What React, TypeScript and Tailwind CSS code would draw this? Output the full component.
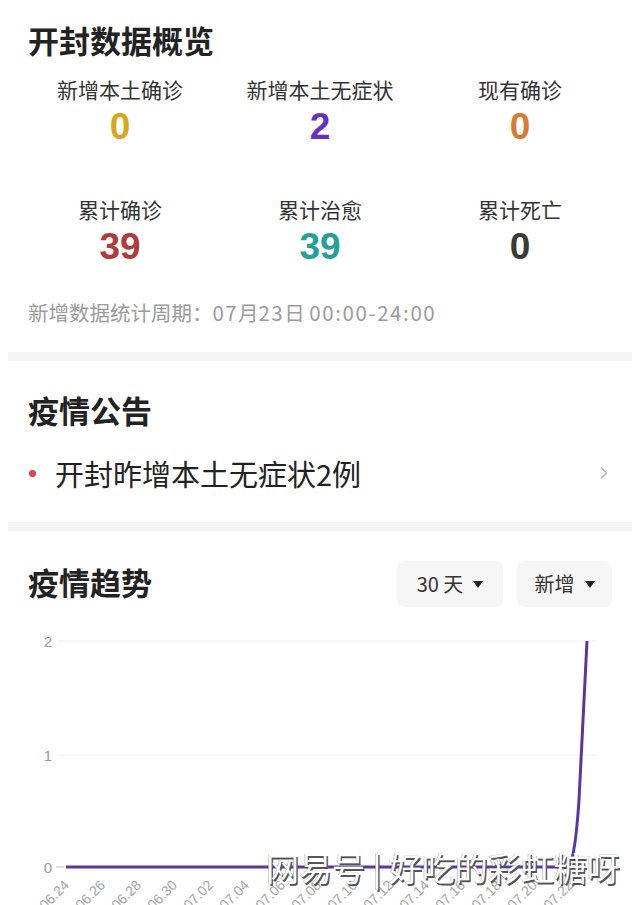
import { ChevronRight } from 'lucide-react';

interface Stat {
  label: string;
  value: string;
  color: string;
}

const stats: Stat[] = [
  { label: '新增本土确诊', value: '0', color: 'text-[#d6a71c]' },
  { label: '新增本土无症状', value: '2', color: 'text-[#6431c0]' },
  { label: '现有确诊', value: '0', color: 'text-[#d97a33]' },
  { label: '累计确诊', value: '39', color: 'text-[#b23a3c]' },
  { label: '累计治愈', value: '39', color: 'text-[#24a09c]' },
  { label: '累计死亡', value: '0', color: 'text-[#3a3a3a]' },
];

const dates = ['06.24', '06.26', '06.28', '06.30', '07.02', '07.04', '07.06', '07.08', '07.10', '07.12', '07.14', '07.16', '07.18', '07.20', '07.22'];

function Caret() {
  return (
    <svg width="10" height="7" viewBox="0 0 10 7" className="ml-[10px]">
      <path d="M0 0h10L5 7z" fill="#222" />
    </svg>
  );
}

function TrendChart() {
  const x0 = 66;
  const step = 36;
  return (
    <svg width="640" height="285" viewBox="0 620 640 285" className="block">
      {[641, 755].map((y) => (
        <line key={y} x1="58" x2="597" y1={y} y2={y} stroke="#f0f0f0" strokeWidth="1" />
      ))}
      <text x="52" y="647" textAnchor="end" fontSize="15" fill="#9a9a9a" fontFamily="Liberation Sans, sans-serif">2</text>
      <text x="52" y="761" textAnchor="end" fontSize="15" fill="#9a9a9a" fontFamily="Liberation Sans, sans-serif">1</text>
      <text x="52" y="873" textAnchor="end" fontSize="15" fill="#9a9a9a" fontFamily="Liberation Sans, sans-serif">0</text>
      <line x1="56" x2="64" y1="867" y2="867" stroke="#bbb" strokeWidth="1" />
      {dates.map((d, i) => {
        const x = x0 + i * step + 4;
        return (
          <text
            key={d}
            x={x}
            y={886}
            textAnchor="end"
            fontSize="14"
            fill="#a5a5a5"
            fontFamily="Liberation Sans, sans-serif"
            transform={`rotate(-45 ${x} 886)`}
          >
            {d}
          </text>
        );
      })}
      <path
        d="M66 867 L566 867 C572 867 576 845 579 800 L587 641"
        fill="none"
        stroke="#5a35a6"
        strokeWidth="3"
        strokeLinejoin="round"
      />
    </svg>
  );
}

export default function App() {
  return (
    <div className="relative w-[640px] h-[905px] overflow-hidden bg-white text-[#222] font-['Noto_Sans_CJK_SC','Noto_Sans',sans-serif]">
      {/* 数据概览 */}
      <div className="pt-[22px]">
        <h1 className="px-7 text-[31px] leading-[36px] font-bold">开封数据概览</h1>
        <div className="mt-[17px] px-5 grid grid-cols-3 gap-y-[49px]">
          {stats.map((s) => (
            <div key={s.label} className="flex flex-col items-center">
              <div className="text-[21px] leading-[28px] text-[#333]">{s.label}</div>
              <div className={`mt-[5px] font-['Liberation_Sans',sans-serif] text-[37px] leading-[38px] font-bold ${s.color}`}>
                {s.value}
              </div>
            </div>
          ))}
        </div>
        <p className="mt-[32px] px-7 text-[20.5px] leading-[28px] text-[#9b9b9b]">
          新增数据统计周期：<span className="tracking-[1.4px]">07</span>月<span className="tracking-[1.4px]">23</span>日 <span className="tracking-[1.6px]">00:00-24:00</span>
        </p>
      </div>

      <div className="mt-[26px] mx-2 h-[9px] bg-[#f5f5f5]" />

      {/* 公告 */}
      <div>
        <h2 className="mt-[31px] px-7 text-[31px] leading-[36px] font-bold">疫情公告</h2>
        <div className="mt-[27px] flex items-center pl-[29px] pr-[26px] h-[36px]">
          <span className="w-[7px] h-[7px] rounded-full bg-[#d9434f]" />
          <span className="ml-[19px] flex-1 text-[29px] leading-[36px] text-[#222]">开封昨增本土无症状2例</span>
          <ChevronRight size={20} strokeWidth={1.5} className="text-[#b5b5b5]" />
        </div>
      </div>

      <div className="mt-[31px] mx-2 h-[9px] bg-[#f5f5f5]" />

      {/* 趋势 */}
      <div className="mt-[30px] flex items-center h-[46px] pl-7 pr-[28px]">
        <h2 className="flex-1 text-[31px] leading-[36px] font-bold -mt-[4px]">疫情趋势</h2>
        <div className="flex items-center justify-center w-[106px] h-[46px] rounded-lg bg-[#f6f6f6] text-[20px] text-[#333]">
          30 天<Caret />
        </div>
        <div className="ml-[14px] flex items-center justify-center w-[95px] h-[46px] rounded-lg bg-[#f6f6f6] text-[20px] text-[#333]">
          新增<Caret />
        </div>
      </div>

      <div className="mt-[13px]">
        <TrendChart />
      </div>

      <div className="absolute left-[266px] top-[845px] text-[33px] leading-[44px] text-white whitespace-nowrap [text-shadow:1.5px_1.5px_0_#555,-0.5px_-0.5px_0_#999]">
        网易号 | 好吃的彩虹糖呀
      </div>
    </div>
  );
}
